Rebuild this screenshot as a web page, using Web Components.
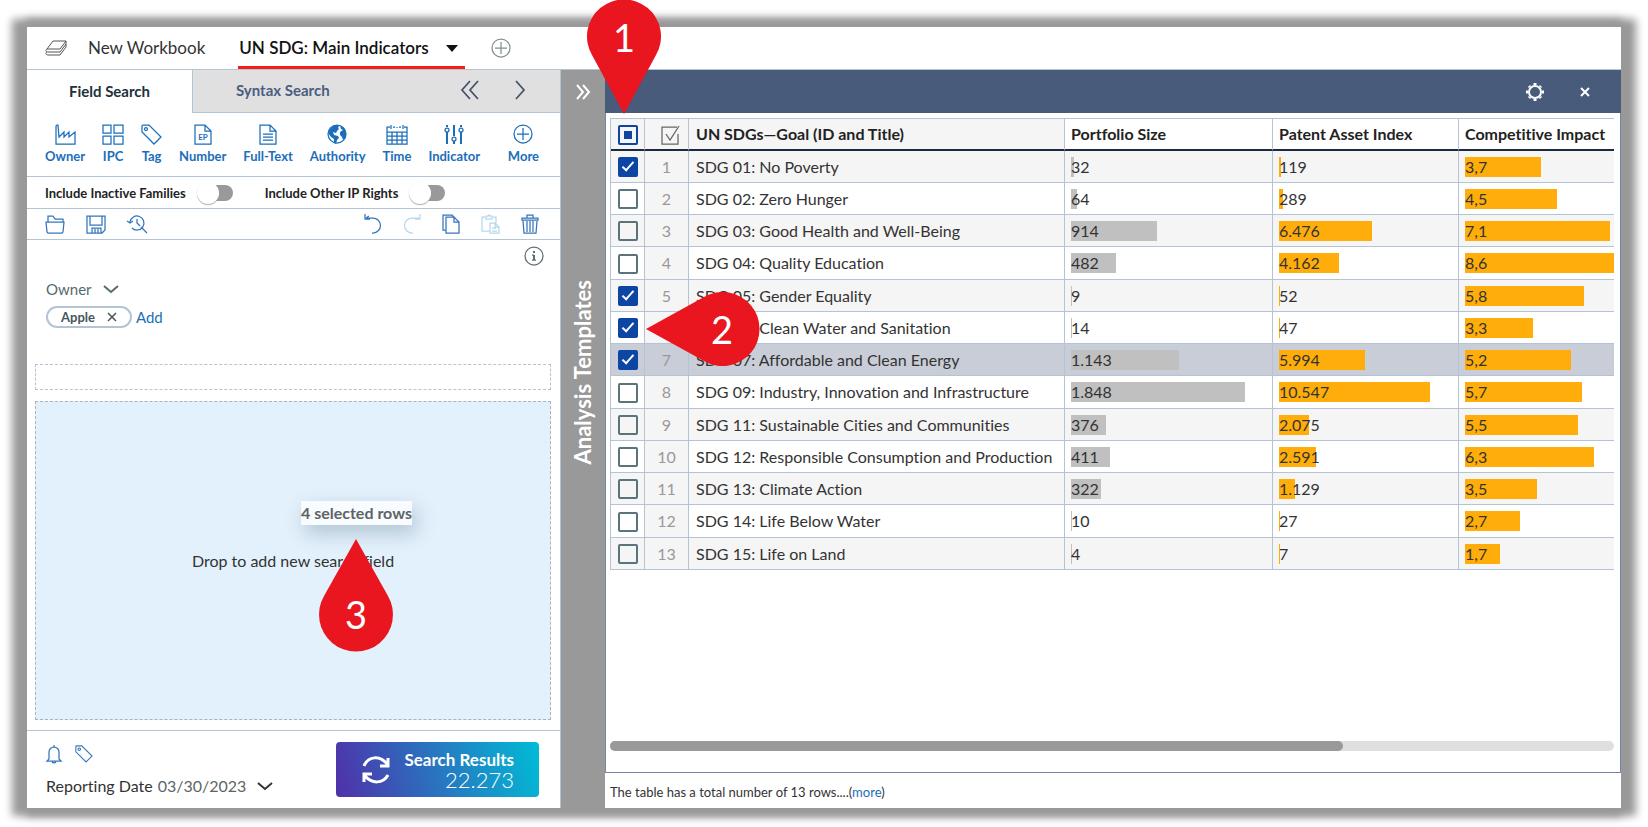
<!DOCTYPE html>
<html lang="en">
<head>
<meta charset="utf-8">
<meta name="viewport" content="width=device-width, initial-scale=1">
<title>UN SDG: Main Indicators</title>
<style>
    :root {
        --line: #b4c4d4;
        --blue: #1b6ebb;
        --navy: #485b7a;
        --grey: #999;
        --text: #333;
    }

    body {
        margin: 0;
        background: #fff;
        color: var(--text);
        font-family: Lato, "Liberation Sans", sans-serif;
        font-size: 17px;
        font-variant-ligatures: none;
        line-height: 20px;
    }
</style>
</head>
<body>
<wb-stage>
    <wb-header></wb-header>
    <wb-search-panel></wb-search-panel>
    <wb-side-bar>Analysis Templates</wb-side-bar>
    <wb-results></wb-results>
    <wb-pin slot="pins" style="left: 587px; top: 0">1</wb-pin>
    <wb-pin slot="pins" point="left" style="left: 646px; top: 292px">2</wb-pin>
    <wb-pin slot="pins" point="up" style="left: 319px; top: 539px">3</wb-pin>
</wb-stage>

<script>
const BASE = `
    *, *::before, *::after { box-sizing: border-box; }
    button, input, select {
        margin: 0;
        padding: 0;
        border: 0;
        background: none;
        color: inherit;
        font: inherit;
        font-variant-ligatures: none;
        white-space: nowrap;
    }
    button, select { cursor: pointer; }
    a { text-decoration: none; }
`;

const TAG = '<path d="M1 2v6l12 12 7-7L8 1H2a1 1 0 0 0-1 1z"/><circle cx="5" cy="5" r="1.5"/>';

// name: [width, height, markup]
const ICONS = {
    books: [22, 16, '<path stroke-width="1" d="M8 1h13l-6 8H2zM21 1v3l-6 8H3c-2 0-3-2-1-3M21 4v3l-6 8H3c-2 0-3-2-1-3"/>'],
    caret: [12, 7, '<path fill="currentColor" stroke="none" d="M0 0h12L6 7z"/>'],
    plus: [20, 20, '<circle cx="10" cy="10" r="9"/><path d="M10 4v12M4 10h12"/>'],
    back: [18, 20, '<path stroke-width="1.75" d="M9 1 1 10l8 9M17 1l-8 9 8 9"/>'],
    next: [12, 20, '<path stroke-width="1.75" d="m2 1 8 9-8 9"/>'],
    factory: [22, 21, '<path d="M2 20V2l1-1h1l1 12 5-5v5l5-5v5l6-5v12z"/>'],
    squares: [22, 21, '<path d="M1 1h8v8H1zM12 1h9v8h-9zM1 12h8v8H1zM12 12h9v8h-9z"/>'],
    tag: [21, 21, TAG],
    label: [18, 18, `<g transform="scale(.85)">${TAG}</g>`],
    number: [18, 21, '<path d="M1 1h10l6 6v13H1zM11 1v6h6"/><text x="9" y="16" text-anchor="middle" font-size="8" font-weight="700" fill="currentColor" stroke="none">EP</text>'],
    text: [18, 21, '<path d="M1 1h10l6 6v13H1zM11 1v6h6M4 10h10M4 13h10M4 16h10"/>'],
    globe: [21, 21, '<circle cx="10" cy="10" r="9"/><path fill="currentColor" stroke="none" d="M1 9C2 5 5 2 9 1l3 1-1 2 1 1-2 2-1 2-3-1 1 3 4 1 1 2-2 2-1 4-2-1v-4l-3-2zM13 2l4 2 2 4v5l-3 3-1-3-2-2V8l3-2-2-1z"/>'],
    calendar: [22, 21, '<path d="M4 3H1v17h20V3h-3M7 3h2M13 3h2M11 3v1M5 1v4M17 1v4M1 8h20M1 12h20M1 16h20M6 8v12M11 8v12M16 8v12"/>'],
    sliders: [20, 21, '<path stroke-width="2" d="M3 1v2M3 8v12M10 1v11M10 17v3M17 1v2M17 8v12"/><circle cx="3" cy="6" r="2"/><circle cx="10" cy="15" r="2"/><circle cx="17" cy="6" r="2"/>'],
    more: [21, 21, '<circle cx="10" cy="10" r="9"/><path d="M10 4v12M4 10h12"/>'],
    folder: [20, 19, '<path d="M3 7V1h5l2 3h8v3M1 7h18l-1 10-1 1H3l-1-1z"/>'],
    save: [20, 19, '<path d="M1 1h18v14l-3 3H1zM4 1v9h12V1M6 18v-5h9v5M9 18v-4M12 18v-4"/>'],
    history: [20, 19, '<path d="M3 7a7 7 0 1 1 2 6M0 6l3 2 3-2M10 4v4l3 3M14 12l6 6"/>'],
    undo: [18, 20, '<path d="M2 4h7a7 7 0 0 1 0 15H8M1 0v5h5M2 4l3-2"/>'],
    redo: [18, 20, '<path d="M16 4H9a7 7 0 0 0 0 15h1M17 0v5h-5"/>'],
    copy: [18, 20, '<path d="M4 3h8l5 5v11H4zM12 3v5h5M4 16H1V1h9l2 2"/>'],
    paste: [19, 20, '<path d="M9 17H1V3h3M12 3h3v6M5 2h2l1-1 1 1h2v3H5zM9 9h5l4 4v6H9zM14 9v4h4M11 14h4M11 17h5"/>'],
    trash: [18, 20, '<path d="M1 4h16v2H1zM6 4V1h6v3M2 7l1 12h12l1-12M6 7v11M9 7v11M12 7v11"/>'],
    info: [20, 20, '<circle cx="10" cy="10" r="9"/><path stroke-width="2" d="M10 9v5M10 5v2"/><path d="M8 9h2M8 14h4"/>'],
    down: [16, 9, '<path stroke-width="2" d="m1 1 7 6 7-6"/>'],
    remove: [10, 10, '<path stroke-width="1.5" d="m1 1 8 8M9 1 1 9"/>'],
    cross: [10, 10, '<path stroke-width="2" d="m1 1 8 8M9 1 1 9"/>'],
    bell: [16, 20, '<path d="M3 15V8a5 5 0 0 1 10 0v7l2 2H1zM8 3V1M6 18c1 1 3 1 4 0"/>'],
    refresh: [28, 30, '<path stroke-width="3" d="M2 11C6 1 18 0 25 9M26 3v8h-8M26 20C21 29 10 29 3 21M2 27v-8h8"/>'],
    forward: [14, 16, '<path stroke-width="2" d="m1 1 6 7-6 7M7 1l6 7-6 7"/>'],
    gear: [20, 20, '<circle cx="10" cy="10" r="6" stroke-width="2"/><path stroke-width="3" d="M10 1v2M10 17v2M1 10h2M17 10h2M4 4l1 1M15 15l1 1M4 16l1-1M15 5l1-1"/>'],
    select: [19, 19, '<path d="M17 8v10H1V1h15M5 8l4 6L18 0"/>']
};

class WbIcon extends HTMLElement {
    constructor() {
        super();
        this.attachShadow({ mode: "open" });
    }

    connectedCallback() {
        const [width, height, markup] = ICONS[this.getAttribute("name")];
        this.shadowRoot.innerHTML = `
        <style>
            :host { display: inline-flex; flex: none; }
            svg { display: block; fill: none; stroke: currentColor; stroke-width: 1.25; overflow: visible; }
        </style>
        <svg width="${width}" height="${height}" viewBox="0 0 ${width} ${height}" aria-hidden="true">${markup}</svg>
        `;
    }
}

class WbStage extends HTMLElement {
    constructor() {
        super();
        this.attachShadow({ mode: "open" }).innerHTML = `
        <style>
            ${BASE}
            :host {
                display: flex;
                position: relative;
                min-height: 100vh;
                box-sizing: border-box;
                padding: 27px 27px 19px;
            }
            .window {
                flex: 1;
                min-width: 0;
                display: grid;
                grid-template: auto 1fr / 534px 44px minmax(0, 1fr);
                background: #fff;
                box-shadow: -7px 0 8px 8px var(--grey), 7px 0 8px 8px var(--grey);
            }
        </style>
        <main class="window"><slot></slot></main>
        <slot name="pins"></slot>
        `;
    }
}

class WbHeader extends HTMLElement {
    constructor() {
        super();
        this.attachShadow({ mode: "open" }).innerHTML = `
        <style>
            ${BASE}
            :host {
                grid-column: 1 / -1;
                display: flex;
                align-items: center;
                height: 43px;
                box-sizing: border-box;
                padding-left: 18px;
                border-bottom: 1px solid var(--line);
            }
            .books { color: #555; margin-right: 21px; }
            .current {
                display: flex;
                align-items: center;
                gap: 17px;
                height: 42px;
                margin: 0 26px 0 33px;
                padding: 3px 7px 0 1px;
                border-bottom: 3px solid #f51f14;
                color: #111;
                font-weight: 600;
            }
            .add { display: flex; color: #7e9390; }
        </style>
        <wb-icon class="books" name="books"></wb-icon>
        <button>New Workbook</button>
        <button class="current">UN SDG: Main Indicators <wb-icon name="caret"></wb-icon></button>
        <button class="add" aria-label="Add workbook"><wb-icon name="plus"></wb-icon></button>
        `;
    }
}

class WbField extends HTMLElement {
    constructor() {
        super();
        this.attachShadow({ mode: "open" });
    }

    connectedCallback() {
        this.shadowRoot.innerHTML = `
        <style>
            ${BASE}
            :host { display: block; }
            button {
                display: grid;
                justify-items: center;
                gap: 2px;
                color: var(--blue);
                font-size: 13px;
                font-weight: 700;
                line-height: 18px;
            }
        </style>
        <button><wb-icon name="${this.getAttribute("icon")}"></wb-icon><slot></slot></button>
        `;
    }
}

class WbToggle extends HTMLElement {
    constructor() {
        super();
        this.attachShadow({ mode: "open" }).innerHTML = `
        <style>
            ${BASE}
            :host { display: block; color: #222; font-size: 13px; font-weight: 700; }
            label { display: flex; align-items: center; gap: 13px; }
            input {
                appearance: none;
                position: relative;
                width: 34px;
                height: 16px;
                border-radius: 8px;
                background: var(--grey);
            }
            input::before {
                content: "";
                position: absolute;
                left: -2px;
                top: -3px;
                width: 22px;
                height: 22px;
                border-radius: 50%;
                background: #fff;
                box-shadow: 0 1px 1px #aaa;
            }
            input:checked::before { left: 14px; }
        </style>
        <label><slot></slot><input type="checkbox"></label>
        `;
    }
}

class WbSearchPanel extends HTMLElement {
    constructor() {
        super();
        this.attachShadow({ mode: "open" }).innerHTML = `
        <style>
            ${BASE}
            :host {
                display: flex;
                flex-direction: column;
                border-right: 1px solid var(--line);
            }
            nav { display: flex; height: 43px; font-size: 15px; font-weight: 700; }
            nav .active { width: 165px; padding-bottom: 2px; color: #22313a; }
            .rest {
                flex: 1;
                display: flex;
                align-items: center;
                padding: 0 34px 2px 43px;
                border: solid var(--line);
                border-width: 0 0 1px 1px;
                background: #e0e0e0;
                color: #45506a;
            }
            .rest button:first-child { color: #4a5d82; margin-right: auto; }
            .rest button + button + button { margin-left: 35px; }
            .rest wb-icon { display: flex; }
            .bar { display: flex; align-items: center; padding: 0 21px 0 18px; border-bottom: 1px solid var(--line); }
            .fields { height: 64px; gap: 17px; align-items: flex-start; padding-top: 11px; }
            .fields :last-child { margin-left: auto; }
            .options { height: 32px; gap: 32px; }
            .actions { height: 31px; gap: 21px; color: #3575bd; }
            .actions button { display: flex; }
            .actions button:nth-child(4) { margin-left: auto; }
            .actions button:disabled { color: #b5d7ec; }
            .query { height: 124px; padding: 6px 16px 0 19px; color: #555; }
            .info { display: flex; justify-content: flex-end; height: 33px; color: #5c7075; }
            .owner { display: flex; align-items: center; gap: 11px; color: #566a6e; font-size: 15px; }
            .chips { display: flex; align-items: center; gap: 4px; margin-top: 7px; }
            .chip {
                display: flex;
                align-items: center;
                gap: 12px;
                height: 22px;
                padding: 0 13px;
                border: 2px solid var(--line);
                border-radius: 11px;
                color: #45565b;
                font-size: 13px;
                font-weight: 700;
            }
            .chips a { color: var(--blue); font-size: 15px; }
            .slot { height: 26px; margin: 0 9px 11px 8px; border: 1px dashed var(--line); }
            .drop {
                flex: 1;
                position: relative;
                display: grid;
                place-items: center;
                min-height: 200px;
                margin: 0 9px 10px 8px;
                border: 1px dashed #aab3ba;
                background: #e3f1fc;
                font-size: 16px;
            }
            .dragged {
                position: absolute;
                left: 265px;
                top: 99px;
                padding: 2px 0;
                background: rgba(255, 255, 255, .75);
                box-shadow: 4px 8px 20px rgba(60, 90, 110, .3);
                color: #5e6366;
                font-weight: 700;
            }
            footer {
                display: flex;
                justify-content: space-between;
                align-items: center;
                height: 78px;
                padding: 0 21px 0 19px;
                border-top: 1px solid var(--line);
            }
            .alerts { display: flex; align-items: center; gap: 13px; height: 22px; color: #3575bd; margin-bottom: 11px; }
            .date { display: flex; align-items: center; gap: 5px; font-size: 16px; }
            select { appearance: none; color: #5c6668; }
            .date wb-icon { margin-left: 5px; }
            .search {
                display: flex;
                justify-content: space-between;
                align-items: center;
                width: 203px;
                height: 55px;
                padding: 0 25px 0 26px;
                border-radius: 4px;
                background: linear-gradient(75deg, #5030a9, #00bcd6);
                color: #fff;
                font-weight: 700;
                text-align: right;
            }
            .search strong { display: block; font-size: 22px; font-weight: 300; }
        </style>
        <nav>
            <button class="active">Field Search</button>
            <div class="rest">
                <button>Syntax Search</button>
                <button aria-label="Collapse"><wb-icon name="back"></wb-icon></button>
                <button aria-label="Next"><wb-icon name="next"></wb-icon></button>
            </div>
        </nav>
        <div class="bar fields">
            <wb-field icon="factory">Owner</wb-field>
            <wb-field icon="squares">IPC</wb-field>
            <wb-field icon="tag">Tag</wb-field>
            <wb-field icon="number">Number</wb-field>
            <wb-field icon="text">Full-Text</wb-field>
            <wb-field icon="globe">Authority</wb-field>
            <wb-field icon="calendar">Time</wb-field>
            <wb-field icon="sliders">Indicator</wb-field>
            <wb-field icon="more">More</wb-field>
        </div>
        <div class="bar options">
            <wb-toggle>Include Inactive Families</wb-toggle>
            <wb-toggle>Include Other IP Rights</wb-toggle>
        </div>
        <div class="bar actions">
            <button aria-label="Open"><wb-icon name="folder"></wb-icon></button>
            <button aria-label="Save"><wb-icon name="save"></wb-icon></button>
            <button aria-label="Search history"><wb-icon name="history"></wb-icon></button>
            <button aria-label="Undo"><wb-icon name="undo"></wb-icon></button>
            <button aria-label="Redo" disabled><wb-icon name="redo"></wb-icon></button>
            <button aria-label="Copy"><wb-icon name="copy"></wb-icon></button>
            <button aria-label="Paste" disabled><wb-icon name="paste"></wb-icon></button>
            <button aria-label="Delete"><wb-icon name="trash"></wb-icon></button>
        </div>
        <section class="query">
            <div class="info"><wb-icon name="info"></wb-icon></div>
            <button class="owner">Owner <wb-icon name="down"></wb-icon></button>
            <div class="chips">
                <button class="chip">Apple <wb-icon name="remove"></wb-icon></button>
                <a href="#">Add</a>
            </div>
        </section>
        <div class="slot"></div>
        <section class="drop">
            <span>Drop to add new search field</span>
            <span class="dragged">4 selected rows</span>
        </section>
        <footer>
            <div>
                <div class="alerts"><wb-icon name="bell"></wb-icon><wb-icon name="label"></wb-icon></div>
                <label class="date">Reporting Date
                    <select><option>03/30/2023</option></select>
                    <wb-icon name="down"></wb-icon>
                </label>
            </div>
            <button class="search">
                <wb-icon name="refresh"></wb-icon>
                <span>Search Results <strong>22.273</strong></span>
            </button>
        </footer>
        `;
    }
}

class WbSideBar extends HTMLElement {
    constructor() {
        super();
        this.attachShadow({ mode: "open" }).innerHTML = `
        <style>
            ${BASE}
            :host {
                display: flex;
                flex-direction: column;
                align-items: center;
                background: var(--grey);
                color: #fff;
            }
            button { display: flex; margin-top: 14px; }
            .label {
                margin: auto 0;
                padding-top: 164px;
                font-size: 22px;
                font-weight: 700;
                line-height: 26px;
                writing-mode: vertical-rl;
                rotate: 180deg;
            }
        </style>
        <button aria-label="Expand"><wb-icon name="forward"></wb-icon></button>
        <span class="label"><slot></slot></span>
        `;
    }
}

const ROWS = [
    ["01: No Poverty", 32, 119, 37, true],
    ["02: Zero Hunger", 64, 289, 45],
    ["03: Good Health and Well-Being", 914, 6476, 71],
    ["04: Quality Education", 482, 4162, 86],
    ["05: Gender Equality", 9, 52, 58, true],
    ["06: Clean Water and Sanitation", 14, 47, 33, true],
    ["07: Affordable and Clean Energy", 1143, 5994, 52, true],
    ["09: Industry, Innovation and Infrastructure", 1848, 10547, 57],
    ["11: Sustainable Cities and Communities", 376, 2075, 55],
    ["12: Responsible Consumption and Production", 411, 2591, 63],
    ["13: Climate Action", 322, 1129, 35],
    ["14: Life Below Water", 10, 27, 27],
    ["15: Life on Land", 4, 7, 17]
];

class WbSdgTable extends HTMLElement {
    constructor() {
        super();
        this.attachShadow({ mode: "open" });
    }

    connectedCallback() {
        this.render();
        this.shadowRoot.querySelector("thead input").indeterminate = true;
    }

    // Longest bar of a column is "full" pixels wide
    bar(value, max, full, label, color = "") {
        const width = Math.max(1, Math.round(value / max * full));
        return `<td class="value ${color}"><div style="--bar: ${width}px">${label}</div></td>`;
    }

    row([title, size, index, impact, checked], i) {
        const group = n => n.toLocaleString("de-DE");
        return `
        <tr class="${i === 6 ? "hover" : ""}">
            <td class="tick"><input type="checkbox" aria-label="Select SDG ${title}" ${checked ? "checked" : ""}></td>
            <td class="number">${i + 1}</td>
            <td>SDG ${title}</td>
            ${this.bar(size, 1848, 174, group(size))}
            ${this.bar(index, 10547, 151, group(index), "gold")}
            ${this.bar(impact, 86, 176, (impact / 10).toLocaleString("de-DE"), "gold")}
        </tr>`;
    }

    render() {
        this.shadowRoot.innerHTML = `
        <style>
            ${BASE}
            :host { display: block; overflow: hidden; }
            table {
                width: 100%;
                table-layout: fixed;
                border-collapse: separate;
                border-spacing: 0;
                border-top: 1px solid var(--line);
                border-left: 1px solid var(--line);
                font-size: 16px;
            }
            th, td {
                height: 32px;
                padding: 0 0 0 7px;
                overflow: hidden;
                border: solid var(--line);
                border-width: 0 1px 1px 0;
                text-align: left;
                white-space: nowrap;
            }
            th:last-child, td:last-child { border-right: 0; }
            th { border-bottom: 2px solid #1c2a3e; color: #222; font-weight: 700; }
            tr:nth-child(4n) td { height: 33px; }
            tbody tr:nth-child(odd), .number, th:nth-child(-n + 3) { background: #f5f5f5; }
            tbody tr.hover, .hover .number { background: #c9cdd7; }
            .number { padding: 0; color: var(--grey); text-align: center; }
            th.number { padding-left: 8px; color: #666; }
            .number wb-icon, .tick input { vertical-align: middle; }
            .tick { padding: 0; text-align: center; }
            .value { padding-left: 6px; }
            .value div {
                height: 20px;
                background: linear-gradient(#c0c0c0, #c0c0c0) 0 0 / var(--bar) 100% no-repeat;
            }
            .gold div { background-image: linear-gradient(#ffad0a, #ffad0a); }
            input {
                appearance: none;
                width: 20px;
                height: 20px;
                border: 2px solid #5a747e;
                border-radius: 2px;
            }
            input:checked, input:indeterminate { border-color: #0c45a3; }
            input:checked { background: #0c45a3; }
            input:checked::before {
                content: "";
                display: block;
                width: 6px;
                height: 12px;
                margin: 0 0 0 5px;
                border: solid #fff;
                border-width: 0 2px 2px 0;
                rotate: 42deg;
            }
            input:indeterminate::before {
                content: "";
                display: block;
                width: 8px;
                height: 8px;
                margin: 4px;
                background: #0c45a3;
            }
        </style>
        <table>
            <colgroup>
                <col style="width: 34px"><col style="width: 44px"><col>
                <col style="width: 208px"><col style="width: 186px"><col style="width: 155px">
            </colgroup>
            <thead>
                <tr>
                    <th class="tick"><input type="checkbox" aria-label="Select all rows"></th>
                    <th class="number"><wb-icon name="select"></wb-icon></th>
                    <th>UN SDGs—Goal (ID and Title)</th>
                    <th class="value">Portfolio Size</th>
                    <th class="value">Patent Asset Index</th>
                    <th class="value">Competitive Impact</th>
                </tr>
            </thead>
            <tbody>${ROWS.map((row, i) => this.row(row, i)).join("")}</tbody>
        </table>
        `;
    }
}

class WbResults extends HTMLElement {
    constructor() {
        super();
        this.attachShadow({ mode: "open" }).innerHTML = `
        <style>
            ${BASE}
            :host { display: flex; flex-direction: column; min-width: 0; }
            header {
                display: flex;
                justify-content: flex-end;
                align-items: center;
                gap: 35px;
                height: 43px;
                padding-right: 31px;
                background: var(--navy);
                color: #fff;
            }
            header wb-icon { display: flex; }
            .body {
                flex: 1;
                display: flex;
                flex-direction: column;
                padding: 5px 6px 21px 4px;
                border: 1px solid #7385a3;
                border-top: 0;
            }
            .track { height: 10px; margin-top: auto; border-radius: 5px; background: #dfdfdf; }
            .thumb { width: 73%; height: 10px; border-radius: 5px; background: var(--grey); }
            footer { height: 35px; padding: 0 5px; font-size: 13px; line-height: 38px; }
            footer a { color: var(--blue); }
        </style>
        <header>
            <button aria-label="Settings"><wb-icon name="gear"></wb-icon></button>
            <button aria-label="Close"><wb-icon name="cross"></wb-icon></button>
        </header>
        <div class="body">
            <wb-sdg-table></wb-sdg-table>
            <div class="track"><div class="thumb"></div></div>
        </div>
        <footer>The table has a total number of 13 rows....(<a href="#">more</a>)</footer>
        `;
    }
}

const PINS = {
    down: [74, 114, "M37 114 5 55A37 37 0 1 1 69 55z"],
    left: [113, 74, "M0 37 58 5A37 37 0 1 1 58 69z"],
    up: [74, 112, "M37 0 69 57A37 37 0 1 1 5 57z"]
};

class WbPin extends HTMLElement {
    constructor() {
        super();
        this.attachShadow({ mode: "open" });
    }

    connectedCallback() {
        const point = this.getAttribute("point") || "down";
        const [width, height, path] = PINS[point];
        this.shadowRoot.innerHTML = `
        <style>
            :host {
                position: absolute;
                display: grid;
                pointer-events: none;
                color: #fff;
                font-size: 38px;
                line-height: 74px;
            }
            svg, span { grid-area: 1 / 1; }
            svg { display: block; fill: #e9161f; overflow: visible; }
            span { width: 74px; text-align: center; }
            .left { justify-self: end; }
            .up { align-self: end; }
        </style>
        <svg width="${width}" height="${height}">
            <path d="${path}"/>
        </svg>
        <span class="${point}"><slot></slot></span>
        `;
    }
}

customElements.define("wb-icon", WbIcon);
customElements.define("wb-field", WbField);
customElements.define("wb-toggle", WbToggle);
customElements.define("wb-header", WbHeader);
customElements.define("wb-search-panel", WbSearchPanel);
customElements.define("wb-side-bar", WbSideBar);
customElements.define("wb-sdg-table", WbSdgTable);
customElements.define("wb-results", WbResults);
customElements.define("wb-pin", WbPin);
customElements.define("wb-stage", WbStage);
</script>
</body>
</html>
